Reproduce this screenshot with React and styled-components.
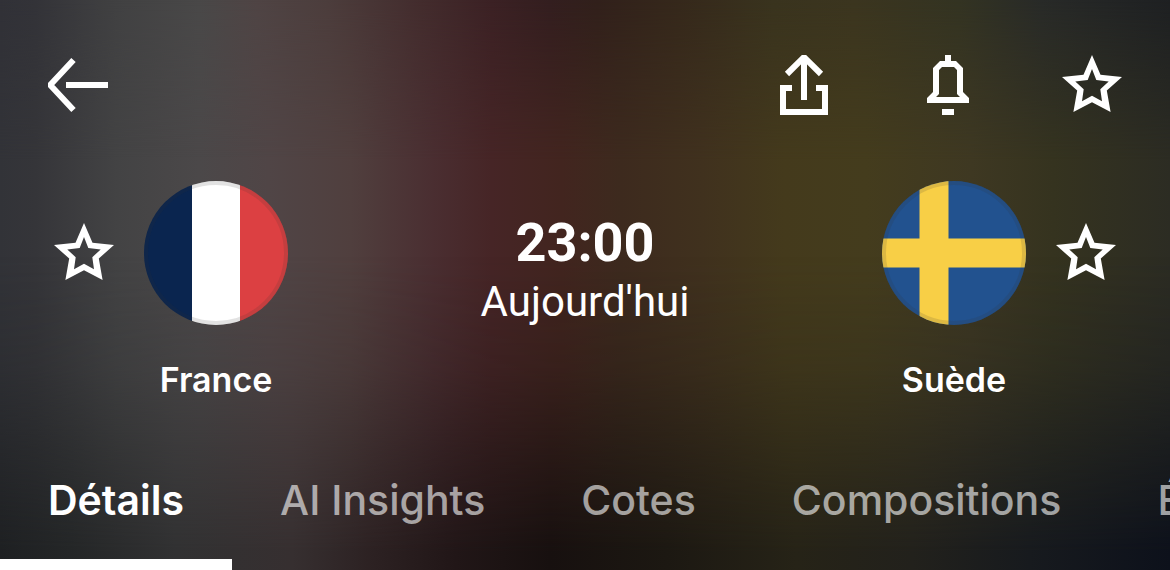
import React, { useState } from 'react';
import styled, { createGlobalStyle } from 'styled-components';

const GlobalStyle = createGlobalStyle`
  *, *::before, *::after {
    box-sizing: border-box;
  }

  body {
    margin: 0;
    background: #1b1918;
    color: #fff;
    font-family: Inter, "Liberation Sans", sans-serif;
  }

  button {
    padding: 0;
    border: 0;
    background: none;
    color: inherit;
    font: inherit;
    cursor: pointer;
  }
`

/* blurred team colours: the middle band, then a top and a bottom band fading into it */
const Wrapper = styled.section`
  position: relative;
  isolation: isolate;
  overflow: hidden;
  background: linear-gradient(90deg, #323338 0%, #353539 3%, #434344 10%, #4b4849 17%, #504546 23%, #503f3e 30%, #4a2e31 37%, #462526 42%, #42251f 48%, #3d2a1e 53%, #40311e 60%, #443a1c 67%, #443c1d 74%, #3e3822 83%, #35331f 90%, #2c2c23 100%);

  &::before,
  &::after {
    content: '';
    position: absolute;
    inset: 0;
    z-index: -1;
  }

  &::before {
    background: linear-gradient(90deg, #313137 0%, #333338 3%, #414142 10%, #494848 17%, #4f4444 22%, #4c3d3c 28%, #432c2d 36%, #3b2124 42%, #331e1f 47%, #31201b 51%, #35281b 58%, #39331e 66%, #3b351f 73%, #333322 82%, #282a28 89%, #1e2022 100%);
    mask-image: linear-gradient(180deg, #000 0%, transparent 28%);
  }

  &::after {
    background: linear-gradient(90deg, #1e2022 0%, #242627 6%, #313132 15%, #362f30 25%, #2c2122 32%, #211617 39%, #17100f 47%, #1c1812 57%, #262317 68%, #22211c 78%, #171a1e 88%, #0d111b 100%);
    mask-image: linear-gradient(180deg, transparent 45%, rgba(0, 0, 0, 0.25) 65%, #000 97%);
  }
`

const Toolbar = styled.header`
  display: flex;
  justify-content: space-between;
  padding: 49px 42px 0;
`

const Actions = styled.div`
  display: flex;
  gap: 72px;
`

const IconButton = styled.button`
  width: 72px;
  height: 72px;

  svg {
    display: block;
    width: 100%;
    height: 100%;
  }
`

const Match = styled.div`
  display: grid;
  grid-template-columns: 1fr auto 1fr;
  padding: 60px 48px 0;
`

const Team = styled.div`
  display: grid;
  grid-template-columns: ${props => props.$away ? '144px 72px' : '72px 144px'};
  column-gap: 24px;
  row-gap: 31px;
  align-items: center;
  justify-content: ${props => props.$away ? 'end' : 'start'};
`

const Flag = styled.svg`
  display: block;
  width: 144px;
  height: 144px;
  border-radius: 50%;
`

const TeamName = styled.h2`
  grid-column: ${props => props.$away ? 1 : 2};
  margin: 0;
  font-size: 34px;
  font-weight: 600;
  line-height: 48px;
  text-align: center;
`

const Kickoff = styled.div`
  padding-top: 32px;
  font-family: Roboto, "Liberation Sans", sans-serif;
  text-align: center;
`

const Time = styled.p`
  margin: 0;
  font-size: 54px;
  font-weight: 700;
  line-height: 60px;
`

const Day = styled.p`
  margin: 0;
  font-size: 42px;
  line-height: 58px;
`

const Tabs = styled.nav`
  display: flex;
  margin-top: 37px;
  overflow: hidden;
`

const Tab = styled.button`
  flex: none;
  height: 129px;
  padding: 0 48px;
  border-bottom: 11px solid ${props => props.$active ? '#fff' : 'transparent'};
  color: ${props => props.$active ? '#fff' : 'rgba(255, 255, 255, 0.6)'};
  font-size: 41px;
  font-weight: ${props => props.$active ? 600 : 500};
  line-height: 60px;
  white-space: nowrap;
`

const BackIcon = () => (
  <svg viewBox="0 0 72 72" fill="none" stroke="currentColor" strokeWidth="6" strokeLinejoin="bevel">
    <path d="M31.5 11L8.2 36l23.3 25" />
    <path d="M24 36h42" />
  </svg>
)

const ShareIcon = () => (
  <svg viewBox="0 0 72 72" fill="none" stroke="currentColor" strokeWidth="6">
    <path d="M24 39h-9v24h42V39h-9" />
    <path d="M36 7v44" />
    <path d="M19 25L36 8.2 53 25" strokeLinejoin="bevel" />
  </svg>
)

const BellIcon = () => (
  <svg viewBox="0 0 72 72" fill="currentColor">
    <path fillRule="evenodd" d="M33 6h6v6h5l7 7v24l6 6v5H15v-5l6-6V19l7-7h5zM30 18l-3 3v24l-3 3h24l-3-3V21l-3-3z" />
    <path d="M30 60h12v6H30z" />
  </svg>
)

const StarIcon = () => (
  <svg viewBox="0 0 72 72" fill="currentColor">
    <path fillRule="evenodd" d="M36 6l8.5 19.7L66 28 50.8 41.5 54.6 63 36 53.2 17.4 63l3.8-21.5L6 28l21.5-2.3zM36 20l-4.3 11-12.4 1.4 8.4 7.8-1.7 12 10-5.4 10 5.4-1.7-12 8.4-7.8L40.3 31z" />
  </svg>
)

const FranceFlag = () => (
  <Flag viewBox="0 0 144 144" role="img" aria-label="France">
    <path fill="#0a254f" d="M0 0h48v144H0z" />
    <path fill="#fff" d="M48 0h48v144H48z" />
    <path fill="#dc4042" d="M96 0h48v144H96z" />
    <circle cx="72" cy="72" r="70" fill="none" stroke="#333" strokeOpacity=".14" strokeWidth="4" />
  </Flag>
)

const SwedenFlag = () => (
  <Flag viewBox="0 0 144 144" role="img" aria-label="Suède">
    <path fill="#22528f" d="M0 0h144v144H0z" />
    <path fill="#f8cf46" d="M37.5 0h29v57.5H144v29H66.5V144h-29V86.5H0v-29h37.5z" />
    <circle cx="72" cy="72" r="70" fill="none" stroke="#333" strokeOpacity=".14" strokeWidth="4" />
  </Flag>
)

const tabs = ['Détails', 'AI Insights', 'Cotes', 'Compositions', 'É']

const App = () => {
  const [active, setActive] = useState('Détails')

  return (
    <Wrapper>
      <GlobalStyle />
      <Toolbar>
        <IconButton aria-label="Retour"><BackIcon /></IconButton>
        <Actions>
          <IconButton aria-label="Partager"><ShareIcon /></IconButton>
          <IconButton aria-label="Notifications"><BellIcon /></IconButton>
          <IconButton aria-label="Suivre le match"><StarIcon /></IconButton>
        </Actions>
      </Toolbar>
      <Match>
        <Team>
          <IconButton aria-label="Suivre France"><StarIcon /></IconButton>
          <FranceFlag />
          <TeamName>France</TeamName>
        </Team>
        <Kickoff>
          <Time>23:00</Time>
          <Day>Aujourd'hui</Day>
        </Kickoff>
        <Team $away>
          <SwedenFlag />
          <IconButton aria-label="Suivre Suède"><StarIcon /></IconButton>
          <TeamName $away>Suède</TeamName>
        </Team>
      </Match>
      <Tabs>
        {tabs.map(tab => (
          <Tab key={tab} $active={tab === active} onClick={() => setActive(tab)}>
            {tab}
          </Tab>
        ))}
      </Tabs>
    </Wrapper>
  )
}

export default App;
